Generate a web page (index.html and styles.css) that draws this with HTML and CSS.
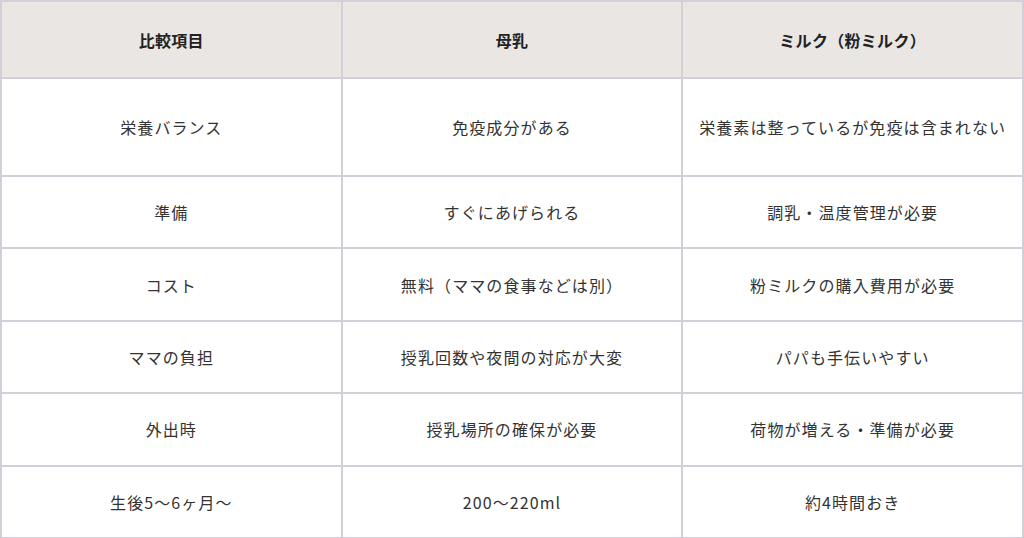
FILE: index.html
```html
<!DOCTYPE html>
<html lang="ja">
<head>
<meta charset="utf-8">
<link rel="stylesheet" href="styles.css">
</head>
<body>
<table class="compare">
  <thead>
    <tr class="head-row">
      <th>比較項目</th>
      <th>母乳</th>
      <th>ミルク（粉ミルク）</th>
    </tr>
  </thead>
  <tbody>
    <tr class="row-tall">
      <td>栄養バランス</td>
      <td>免疫成分がある</td>
      <td>栄養素は整っているが免疫は含まれない</td>
    </tr>
    <tr>
      <td>準備</td>
      <td>すぐにあげられる</td>
      <td>調乳・温度管理が必要</td>
    </tr>
    <tr>
      <td>コスト</td>
      <td>無料（ママの食事などは別）</td>
      <td>粉ミルクの購入費用が必要</td>
    </tr>
    <tr>
      <td>ママの負担</td>
      <td>授乳回数や夜間の対応が大変</td>
      <td>パパも手伝いやすい</td>
    </tr>
    <tr>
      <td>外出時</td>
      <td>授乳場所の確保が必要</td>
      <td>荷物が増える・準備が必要</td>
    </tr>
    <tr>
      <td>生後5〜6ヶ月〜</td>
      <td>200〜220ml</td>
      <td>約4時間おき</td>
    </tr>
  </tbody>
</table>
</body>
</html>
```

FILE: styles.css
```css
html, body {
  margin: 0;
  padding: 0;
  background: #ffffff;
}

body {
  font-family: "Noto Sans CJK JP", "Noto Sans", sans-serif;
  color: #333333;
}

.compare {
  width: 1024px;
  border-collapse: collapse;
  table-layout: fixed;
  border: 2px solid #d2cfd8;
}

.compare th,
.compare td {
  border: 2px solid #d2cfd8;
  text-align: center;
  vertical-align: middle;
  padding: 0 2px;
  line-height: 24px;
}

.compare th {
  background: #e9e6e3;
  font-weight: 700;
  font-size: 16px;
  letter-spacing: 0.3px;
  color: #222222;
  height: 75px;
}

.compare td {
  height: 70.4px;
  font-size: 16px;
  letter-spacing: 1.1px;
}

.compare .row-tall td {
  height: 96px;
}
```
